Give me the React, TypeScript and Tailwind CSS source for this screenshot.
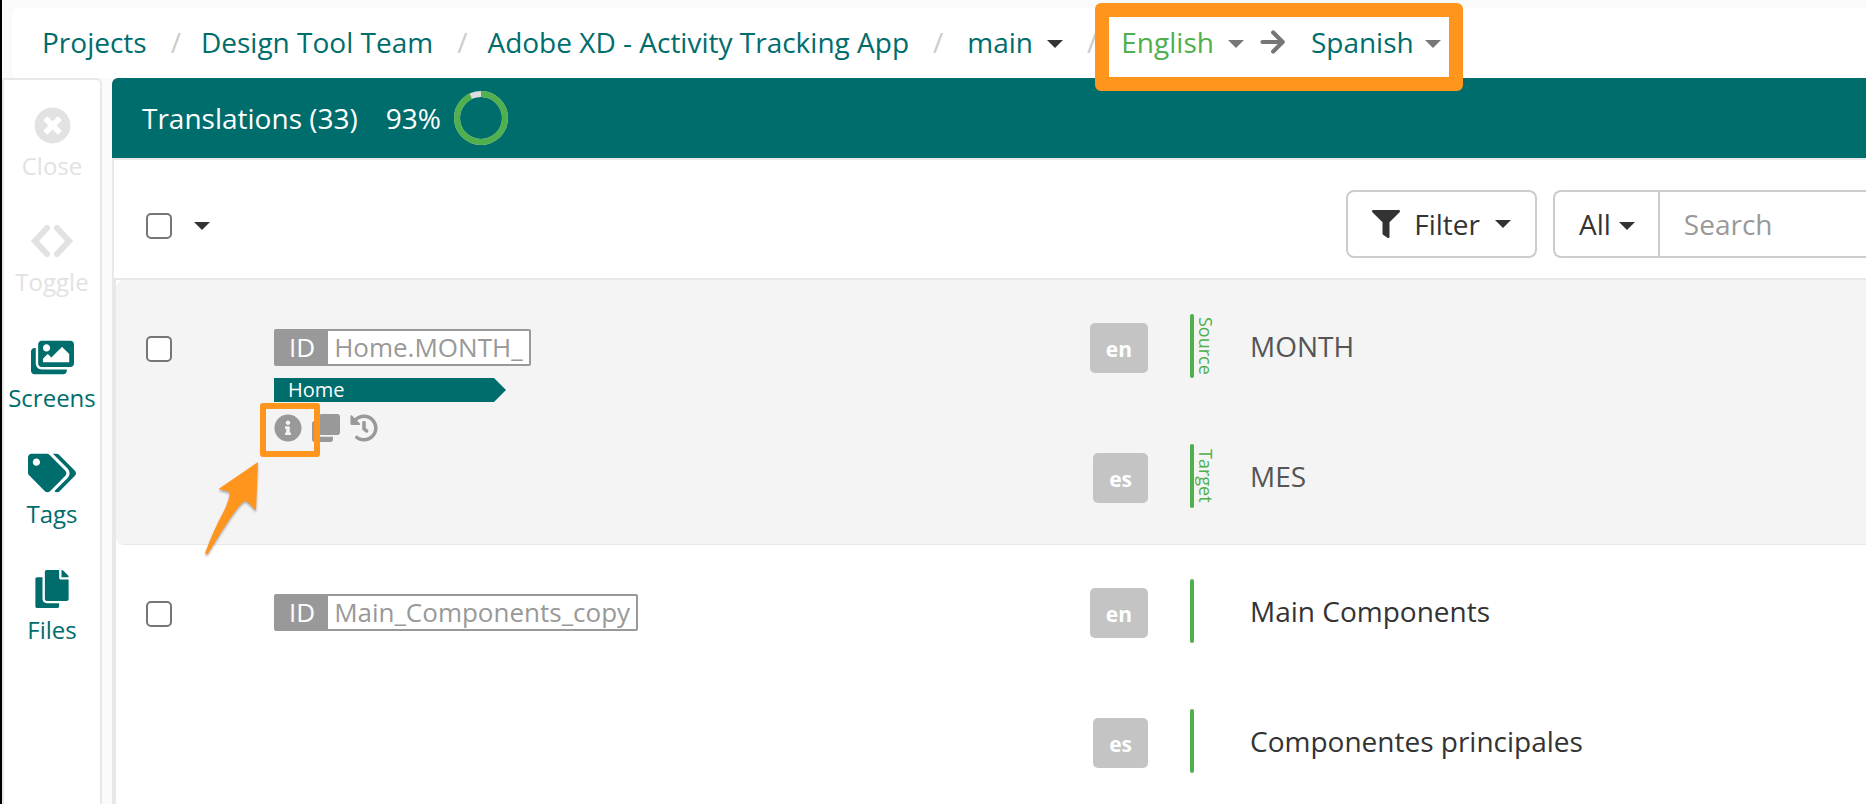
import type { ReactNode } from "react";
import {
  FaClone,
  FaCopy,
  FaFilter,
  FaHistory,
  FaImages,
  FaInfoCircle,
  FaTags,
  FaTimesCircle,
} from "react-icons/fa";

function Caret({ className = "" }: { className?: string }) {
  return (
    <svg viewBox="0 0 16 8" className={`h-2 w-4 shrink-0 ${className}`} fill="currentColor" aria-hidden="true">
      <path d="M0 0h16L8 8z" />
    </svg>
  );
}

function ArrowIcon({ className = "" }: { className?: string }) {
  return (
    <svg
      viewBox="0 0 26 26"
      className={`size-[26px] shrink-0 ${className}`}
      fill="none"
      stroke="currentColor"
      strokeWidth="4.200"
      strokeLinecap="round"
      strokeLinejoin="round"
      aria-hidden="true"
    >
      <path d="M2.500 13H22M13.200 3.500l9.500 9.500-9.500 9.500" />
    </svg>
  );
}

function ChevronsIcon() {
  return (
    <svg
      viewBox="0 0 44 34"
      className="h-[34px] w-11"
      fill="none"
      stroke="currentColor"
      strokeWidth="6"
      strokeLinecap="round"
      strokeLinejoin="miter"
      aria-hidden="true"
    >
      <path d="M17 4 5 17l12 13M27 4l12 13-12 13" />
    </svg>
  );
}

function ProgressRing({ percent }: { percent: number }) {
  return (
    <svg viewBox="0 0 54 54" className="size-[54px]" fill="none" strokeWidth="6" aria-hidden="true">
      <circle cx="27" cy="27" r="24" stroke="#dddddd" />
      <circle
        cx="27"
        cy="27"
        r="24"
        stroke="#4fb04d"
        pathLength={100}
        strokeDasharray={`${percent} 100`}
        transform="rotate(-90 27 27)"
      />
    </svg>
  );
}

function Checkbox({ label, className = "" }: { label: string; className?: string }) {
  return (
    <input
      type="checkbox"
      aria-label={label}
      className={`block size-[26px] shrink-0 appearance-none rounded-[5px] border-2 border-[#767676] bg-white checked:bg-[#006d6d] ${className}`}
    />
  );
}

function SideItem({ icon, label, disabled }: { icon: ReactNode; label: string; disabled?: boolean }) {
  return (
    <button
      type="button"
      disabled={disabled}
      className="flex w-full flex-col items-center gap-[6px] text-2xl leading-8 text-[#006d6d] disabled:text-[#e2e2e2]"
    >
      <span className="flex h-[38px] items-center justify-center">{icon}</span>
      <span>{label}</span>
    </button>
  );
}

function Separator() {
  return <span className="pr-5 pl-6 text-[#cccccc]">/</span>;
}

function Breadcrumb() {
  return (
    <header className="ml-[10px] flex h-[70px] items-center rounded-l-md bg-white pb-0.5 pl-[30px] whitespace-nowrap text-[#006d6d]">
      <a href="#projects">Projects</a>
      <Separator />
      <a href="#team">Design Tool Team</a>
      <Separator />
      <a href="#app">Adobe XD - Activity Tracking App</a>
      <Separator />
      <button type="button" className="ml-1 flex items-center gap-[14px]">
        main <Caret className="mt-1 text-[#333333]" />
      </button>
      <Separator />
      <div className="relative ml-1 flex items-center">
        <button type="button" className="flex items-center gap-[14px] text-[#4fb04d]">
          English <Caret className="mt-1 text-[#777777]" />
        </button>
        <ArrowIcon className="mr-[25px] ml-4 text-[#777777]" />
        <button type="button" className="flex items-center gap-[11px]">
          Spanish <Caret className="mt-1 text-[#777777]" />
        </button>
        <div className="pointer-events-none absolute -top-[19px] -right-[22px] -left-[26px] z-10 h-[88px] rounded-md border-[14px] border-[#ff951c]" />
      </div>
    </header>
  );
}

function Toolbar() {
  return (
    <div className="flex items-center border-b-2 border-[#e8e8e8] pt-[30px] pb-5 pl-8">
      <div className="flex items-center gap-[22px] pt-1 text-[#333333]">
        <Checkbox label="Select all translations" />
        <button type="button" aria-label="Selection options">
          <Caret className="my-2" />
        </button>
      </div>
      <div className="ml-auto flex gap-4 text-[#333333]">
        <button
          type="button"
          className="flex h-[68px] items-center rounded-lg border-2 border-[#cccccc] px-6"
        >
          <FaFilter className="size-7" />
          <span className="mr-[15px] ml-[14px]">Filter</span>
          <Caret />
        </button>
        <div className="flex h-[68px] w-[313px] rounded-l-lg border-2 border-r-0 border-[#cccccc]">
          <button type="button" className="flex items-center gap-2 border-r-2 border-[#cccccc] pr-[23px] pl-6">
            All <Caret className="mt-1" />
          </button>
          <input
            type="search"
            aria-label="Search"
            placeholder="Search"
            className="min-w-0 flex-1 bg-transparent pl-6 outline-none placeholder:text-[#999999]"
          />
        </div>
      </div>
    </div>
  );
}

function KeyLabel({ name }: { name: string }) {
  return (
    <div className="flex h-[37px] w-fit rounded-xs border-2 border-[#999999] bg-white text-[26px] leading-[33px] text-[#999999]">
      <span className="bg-[#999999] px-[13px] text-white">ID</span>
      <span className="px-[6px]">{name}</span>
    </div>
  );
}

function ScreenTag({ name }: { name: string }) {
  return (
    <a
      href="#home"
      className="mt-3 block h-6 w-[232px] bg-[#006d6d] pl-[14px] text-xl leading-6 text-white [clip-path:polygon(0_0,calc(100%-12px)_0,100%_50%,calc(100%-12px)_100%,0_100%)]"
    >
      {name}
    </a>
  );
}

function RowActions() {
  return (
    <div className="relative mt-3 flex w-fit gap-[10px] text-[#999999]">
      <button type="button" aria-label="Details">
        <FaInfoCircle className="size-7" />
      </button>
      <button type="button" aria-label="Copy">
        <FaClone className="size-7" />
      </button>
      <button type="button" aria-label="History">
        <FaHistory className="size-7" />
      </button>
      <div className="pointer-events-none absolute -top-[11px] -left-[14px] h-[54px] w-[60px] rounded-[3px] border-6 border-[#ff951c]" />
      <svg
        viewBox="0 0 60 102"
        className="pointer-events-none absolute top-[46px] -left-[72px] z-10 h-[102px] w-[60px] drop-shadow-[0_2px_1px_rgba(0,0,0,0.3)]"
        fill="#ff951c"
        aria-hidden="true"
      >
        <path d="M56 2 16.500 29l10 2.500q1.500.5 1.200 3-1 7-6 17Q12 69 3.500 92q-.5 3 1.500 2 1 0 2-2Q25 62 36 47.500q6-7 7.500-6.500 1.500 0 2.500 1.500l8 8z" />
      </svg>
    </div>
  );
}

function Language({ code, marker, text }: { code: string; marker?: string; text: string }) {
  return (
    <div className="flex h-16 items-center">
      <span className="flex w-[58px] justify-end pt-1">
        <span className="rounded-[5px] bg-[#c4c4c4] px-4 pt-[7px] pb-[5px] text-[21px] leading-[38px] font-bold text-white">
          {code}
        </span>
      </span>
      <span className="ml-[42px] h-16 w-1 rounded-xs bg-[#4fb04d]" />
      <span className="flex w-14 items-center justify-start text-lg leading-6 text-[#4fb04d]">
        <span className="[writing-mode:vertical-rl]">{marker}</span>
      </span>
      <span>{text}</span>
    </div>
  );
}

interface Translation {
  key: string;
  screen?: string;
  source: string;
  target: string;
  active?: boolean;
}

const translations: Translation[] = [
  { key: "Home.MONTH_", screen: "Home", source: "MONTH", target: "MES", active: true },
  { key: "Main_Components_copy", source: "Main Components", target: "Componentes principales" },
];

function TranslationRow({ item }: { item: Translation }) {
  return (
    <li
      className={`grid grid-cols-[128px_minmax(0,102fr)_minmax(0,97fr)] rounded-l-lg border-b border-[#e8e8e8] pt-[34px] pb-9 pl-[30px] ${
        item.active ? "bg-[#f4f4f4] text-[#555555]" : "bg-white text-[#333333]"
      }`}
    >
      <Checkbox label={`Select ${item.key}`} className="mt-[22px]" />
      <div className="pt-[15px]">
        <KeyLabel name={item.key} />
        {item.screen && <ScreenTag name={item.screen} />}
        {item.active && <RowActions />}
      </div>
      <div className="flex flex-col gap-[66px]">
        <Language code="en" marker={item.active ? "Source" : undefined} text={item.source} />
        <Language code="es" marker={item.active ? "Target" : undefined} text={item.target} />
      </div>
    </li>
  );
}

export default function App() {
  return (
    <div className="flex h-screen flex-col overflow-hidden border-l-2 border-black bg-[#fafafa] pt-2 font-['Open_Sans',sans-serif] text-[28px] leading-10">
      <Breadcrumb />
      <div className="flex min-h-0 flex-1">
        <nav className="flex w-[100px] shrink-0 flex-col gap-10 rounded-tr-md border-2 border-b-0 border-[#e8e8e8] bg-white pt-[26px]">
          <SideItem disabled label="Close" icon={<FaTimesCircle className="size-[37px]" />} />
          <SideItem disabled label="Toggle" icon={<ChevronsIcon />} />
          <SideItem label="Screens" icon={<FaImages className="size-[43px]" />} />
          <SideItem label="Tags" icon={<FaTags className="size-12" />} />
          <SideItem label="Files" icon={<FaCopy className="size-[38px]" />} />
        </nav>
        <main className="ml-[10px] min-w-0 flex-1">
          <div className="flex h-20 items-center rounded-tl-md bg-[#006d6d] pl-[30px] text-white">
            <h1>Translations (33)</h1>
            <span className="mr-[13px] ml-7">93%</span>
            <ProgressRing percent={93} />
          </div>
          <section className="border-t-2 border-l-2 border-[#e8e8e8] bg-white">
            <Toolbar />
            <ul className="border-l-2 border-[#e8e8e8]">
              {translations.map((item) => (
                <TranslationRow key={item.key} item={item} />
              ))}
            </ul>
          </section>
        </main>
      </div>
    </div>
  );
}
